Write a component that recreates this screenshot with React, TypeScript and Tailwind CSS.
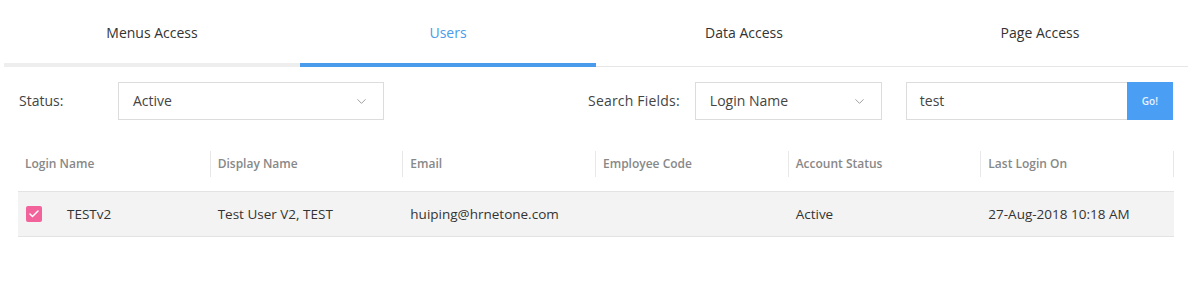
import { ChevronDown, Check } from "lucide-react";

const tabs = ["Menus Access", "Users", "Data Access", "Page Access"];
const columns = ["Login Name", "Display Name", "Email", "Employee Code", "Account Status", "Last Login On"];

const row = {
  login: "TESTv2",
  display: "Test User V2, TEST",
  email: "huiping@hrnetone.com",
  code: "",
  status: "Active",
  lastLogin: "27-Aug-2018 10:18 AM",
};

function Select({ value, className }: { value: string; className: string }) {
  return (
    <div
      className={`flex items-center justify-between border border-[#dcdcdc] bg-white pl-[14px] pr-[14px] h-[38px] ${className}`}
    >
      <span className="text-[14px] text-[#444] -mt-[2px]">{value}</span>
      <ChevronDown className="w-[15px] h-[15px] text-[#999]" strokeWidth={1.5} />
    </div>
  );
}

export default function App() {
  return (
    <div className="w-[1200px] h-[301px] bg-white font-['Open_Sans',sans-serif] text-[#333]">
      <div className="flex ml-[4px] w-[1184px] pt-[20px]">
        {tabs.map((t, i) => (
          <div
            key={t}
            className={`flex-1 flex flex-col items-center ${
              i === 1
                ? "border-b-[4px] border-[#4a9bec]"
                : i === 0
                ? "border-b-[4px] border-[#eeeeee]"
                : "border-b border-[#e6e6e6]"
            }`}
          >
            <span
              className={`text-[14px] leading-[26px] ${
                i === 1 ? "text-[#4a9bec]" : "text-[#333]"
              } ${i > 1 ? "pb-[20px]" : "pb-[17px]"}`}
            >
              {t}
            </span>
          </div>
        ))}
      </div>

      <div className="flex items-center mt-[15px] h-[38px]">
        <span className="ml-[19px] w-[99px] text-[14px] text-[#444] -mt-[2px]">Status:</span>
        <Select value="Active" className="w-[266px]" />
        <span className="ml-[204px] text-[14px] text-[#444] tracking-[0.2px] -mt-[2px]">Search Fields:</span>
        <Select value="Login Name" className="ml-[15px] w-[187px]" />
        <div className="ml-[24px] flex h-[38px]">
          <div className="w-[221px] border border-[#dcdcdc] border-r-0 flex items-center pl-[13px] text-[14px] text-[#444]">
            <span className="-mt-[2px]">test</span>
          </div>
          <button className="w-[46px] bg-[#4a9ff5] text-[#e8f2fe] text-[10px] font-semibold">
            Go!
          </button>
        </div>
      </div>

      <div className="ml-[18px] w-[1156px] mt-[25px]">
        <div className="grid grid-cols-6 h-[37px]">
          {columns.map((c) => (
            <div key={c} className="flex items-center border-r border-[#e8e8e8] h-[26px] pl-[7px] my-auto">
              <span className="text-[12px] font-semibold text-[#888]">{c}</span>
            </div>
          ))}
        </div>
        <div className="mt-[9px] grid grid-cols-6 h-[46px] bg-[#f3f3f3] border-y border-[#e3e3e3] items-center text-[13.5px] text-[#333]">
          <div className="flex items-center pl-[8px]">
            <span className="w-[16px] h-[16px] rounded-[2px] bg-[#f2639c] flex items-center justify-center">
              <Check className="w-[12px] h-[12px] text-white" strokeWidth={3} />
            </span>
            <span className="ml-[25px]">{row.login}</span>
          </div>
          <div className="pl-[7px]">{row.display}</div>
          <div className="pl-[7px]">{row.email}</div>
          <div className="pl-[7px]">{row.code}</div>
          <div className="pl-[7px]">{row.status}</div>
          <div className="pl-[7px]">{row.lastLogin}</div>
        </div>
      </div>
    </div>
  );
}
